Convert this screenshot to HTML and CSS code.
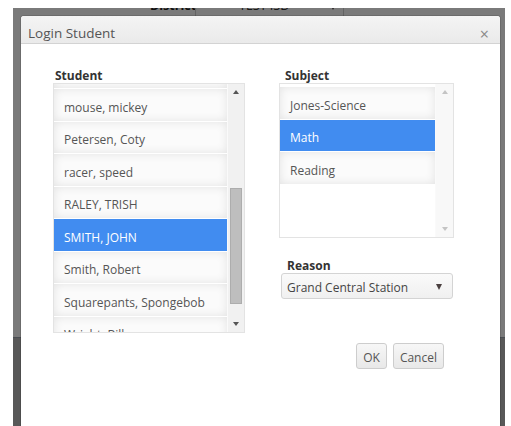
FILE: index.html
```html
<!DOCTYPE html>
<html lang="en">
<head>
<meta charset="utf-8">
<title>Login Student</title>
<link rel="stylesheet" href="styles.css">
</head>
<body>
  <div class="page">
    <div class="topbar">
      <span class="topbar-label">District</span>
      <span class="topbar-select"><span class="topbar-value">TEST ISD</span><span class="caret dark"></span></span>
    </div>
    <div class="page-main"></div>
    <div class="page-lower"></div>
    <div class="overlay"></div>
  </div>

  <div class="dialog" role="dialog" aria-label="Login Student">
    <div class="titlebar">
      <span class="title">Login Student</span>
      <span class="close">&times;</span>
    </div>
    <div class="dialog-body">
      <div class="field">
        <div class="field-label">Student</div>
        <div class="listbox student-list">
          <div class="listbox-items">
            <div class="scroll-content">
              <div class="item">Jones, Tommy</div>
              <div class="item">mouse, mickey</div>
              <div class="item">Petersen, Coty</div>
              <div class="item">racer, speed</div>
              <div class="item">RALEY, TRISH</div>
              <div class="item selected">SMITH, JOHN</div>
              <div class="item">Smith, Robert</div>
              <div class="item">Squarepants, Spongebob</div>
              <div class="item">Wright, Bill</div>
            </div>
          </div>
          <div class="scrollbar">
            <div class="scroll-btn"><span class="arrow-up"></span></div>
            <div class="scroll-track"><div class="thumb"></div></div>
            <div class="scroll-btn"><span class="arrow-down"></span></div>
          </div>
        </div>
      </div>
      <div class="field">
        <div class="field-label subject-label">Subject</div>
        <div class="listbox subject-list">
          <div class="listbox-items padded">
            <div class="item">Jones-Science</div>
            <div class="item selected">Math</div>
            <div class="item">Reading</div>
          </div>
          <div class="scrollbar light">
            <div class="scroll-btn"><span class="arrow-up"></span></div>
            <div class="scroll-track"></div>
            <div class="scroll-btn"><span class="arrow-down"></span></div>
          </div>
        </div>
        <div class="field-label reason-label">Reason</div>
        <div class="select">
          <span>Grand Central Station</span>
          <span class="caret"></span>
        </div>
      </div>
    </div>
    <div class="dialog-footer">
      <button class="btn" type="button">OK</button>
      <button class="btn" type="button">Cancel</button>
    </div>
  </div>
</body>
</html>
```

FILE: styles.css
```css
* { box-sizing: border-box; }

html, body {
  margin: 0;
  padding: 0;
  background: #fff;
  font-family: "Open Sans", "Noto Sans", sans-serif;
  overflow: hidden;
}

/* ---------- page behind the modal ---------- */
.page {
  position: relative;
  margin: 8px 0 0 13px;
  width: 492px;
  height: 418px;
  overflow: hidden;
  background: #fff;
  display: flex;
  flex-direction: column;
}

.topbar {
  margin-top: -10px;
  height: 24px;
  display: flex;
  padding-left: 137px;
  font-size: 12.5px;
  line-height: 16px;
}

.topbar-label {
  font-weight: 700;
  color: #222;
  width: 45px;
  white-space: nowrap;
}

.topbar-select {
  width: 149px;
  border-left: 1px solid #cfcfcf;
  border-right: 1px solid #cfcfcf;
  border-bottom: 1px solid #e6e6e6;
  display: flex;
  justify-content: space-between;
  padding: 0 7px 0 43px;
  color: #333;
}

.topbar-select .caret { margin-top: 6px; }

.page-main { height: 315px; }

.page-lower {
  flex: 1;
  background: #b8b8b8;
  border-top: 1px solid #98a2ac;
}

.overlay {
  position: absolute;
  inset: 0;
  background: rgba(0, 0, 0, 0.52);
}

/* ---------- dialog ---------- */
.dialog {
  position: absolute;
  left: 21px;
  top: 16px;
  width: 479px;
  height: 430px;
  background: #fff;
  border-radius: 3px 3px 0 0;
  box-shadow: 0 0 0 1px rgba(0, 0, 0, 0.12);
}

.titlebar {
  height: 28px;
  border-bottom: 1px solid #d3d3d3;
  background: linear-gradient(#f4f4f4, #eaeaea);
  border-radius: 3px 3px 0 0;
  display: flex;
  align-items: flex-start;
  justify-content: space-between;
  padding: 8px 11px 0 7px;
  line-height: 18px;
}

.title {
  font-size: 13.5px;
  color: #555;
}

.close {
  font-size: 16px;
  color: #888;
  margin-top: 1px;
}

.dialog-body {
  padding: 24px 0 0 32px;
  display: grid;
  grid-template-columns: 192px 175px;
  column-gap: 34px;
  align-items: start;
}

.field-label {
  font-size: 12px;
  line-height: 15px;
  font-weight: 700;
  color: #333;
  padding-left: 2px;
}

.subject-label { padding-left: 6px; }

.reason-label {
  margin-top: 20px;
  padding-left: 8px;
}

/* ---------- list boxes ---------- */
.listbox {
  display: flex;
  border: 1px solid #e3e3e3;
  background: #fff;
}

.student-list { height: 250px; }
.subject-list { height: 155px; }

.listbox-items {
  flex: 1;
  overflow: hidden;
}

.listbox-items.padded { padding-top: 3px; }

.scroll-content { margin-top: -27.5px; }

.item {
  height: 31.5px;
  margin-bottom: 1px;
  padding: 5px 0 0 10px;
  display: flex;
  align-items: center;
  font-size: 12px;
  color: #555;
  background: #fbfbfb;
  box-shadow: inset 0 0 10px rgba(0, 0, 0, 0.1);
  white-space: nowrap;
}

.item.selected {
  background: #418cf0;
  box-shadow: none;
  color: #fff;
}

.scrollbar {
  width: 17px;
  display: flex;
  flex-direction: column;
  background: #f1f1f1;
  border-left: 1px solid #fafafa;
}

.subject-list .scrollbar {
  width: 18px;
  background: #f8f8f8;
}

.scroll-btn {
  height: 16px;
  display: flex;
  align-items: center;
  justify-content: center;
}

.scroll-track { flex: 1; }

.thumb {
  margin: 88px 0 0 2px;
  width: 12px;
  height: 116px;
  background: #bebebe;
  border: 1px solid #adadad;
}

.arrow-up,
.arrow-down {
  width: 0;
  height: 0;
  border-left: 3.5px solid transparent;
  border-right: 3.5px solid transparent;
}

.arrow-up { border-bottom: 4px solid #555; }
.arrow-down { border-top: 4px solid #555; }

.scrollbar.light .arrow-up { border-bottom-color: #c4c4c4; }
.scrollbar.light .arrow-down { border-top-color: #c4c4c4; }

/* ---------- drop-down ---------- */
.select {
  margin-left: 2px;
  height: 26px;
  width: 172px;
  border: 1px solid #d4d4d4;
  border-radius: 3px;
  background: linear-gradient(#fafafa, #f0f0f0);
  display: flex;
  align-items: center;
  justify-content: space-between;
  padding: 2px 10px 0 5px;
  font-size: 12px;
  color: #444;
}

.caret {
  width: 0;
  height: 0;
  border-left: 3.5px solid transparent;
  border-right: 3.5px solid transparent;
  border-top: 6px solid #4a4040;
}

/* ---------- footer ---------- */
.dialog-footer {
  margin-top: 10px;
  padding-right: 56px;
  display: flex;
  justify-content: flex-end;
  gap: 6px;
}

.btn {
  height: 26px;
  padding: 2px 6px 0;
  font-family: inherit;
  font-size: 12px;
  color: #555;
  background: linear-gradient(#f7f7f7, #e8e8e8);
  border: 1px solid #cdcdcd;
  border-radius: 3px;
}
```
